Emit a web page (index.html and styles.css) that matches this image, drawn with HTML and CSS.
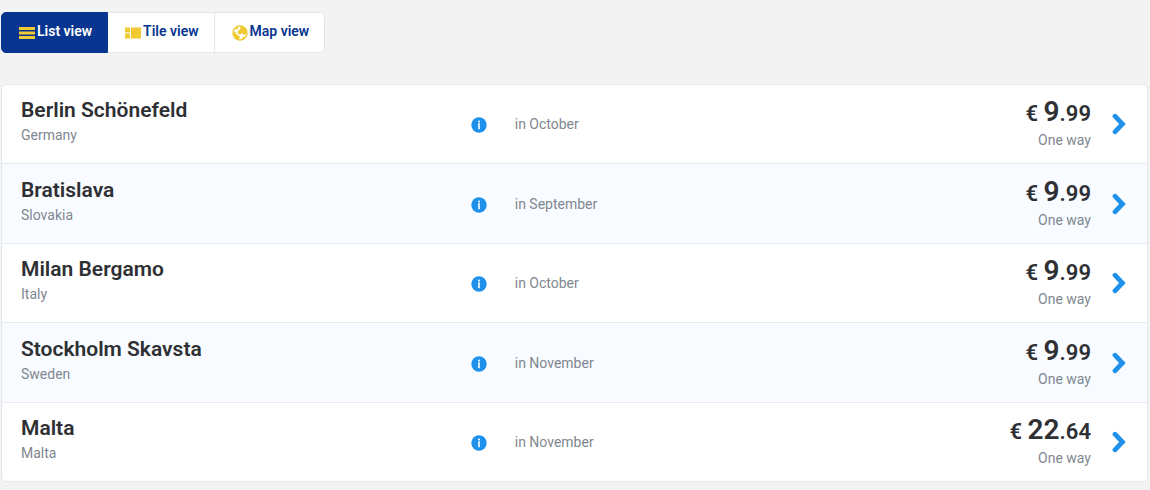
FILE: index.html
```
<!DOCTYPE html>
<html lang="en">
<head>
    <meta charset="UTF-8">
    <meta name="viewport" content="width=device-width, initial-scale=1.0">
    <title>Fare finder</title>
    <link rel="stylesheet" href="styles.css">
</head>
<body>
    <svg class="sprite" aria-hidden="true">
        <symbol id="icon-info" viewBox="0 0 16 16">
            <circle cx="8" cy="8" r="7.7" fill="#2091eb"/>
            <circle cx="8" cy="4.4" r="1" fill="#fff"/>
            <rect x="7.2" y="6.2" width="1.6" height="6" fill="#fff"/>
        </symbol>
        <symbol id="icon-arrow" viewBox="0 0 14 22">
            <path d="M3 3.2 L10.4 11 L3 18.8" fill="none" stroke="#2091eb" stroke-width="4.8" stroke-linecap="round"/>
        </symbol>
    </svg>

    <div class="view-switch">
        <button type="button" class="view-button active">
            <svg class="view-icon" viewBox="0 0 16 16">
                <path d="M0 3.5h16M0 8h16M0 12.5h16" stroke="#f1c933" stroke-width="3"/>
            </svg>
            List view
        </button>
        <button type="button" class="view-button">
            <svg class="view-icon" viewBox="0 0 16 16">
                <path d="M0 2.5h5v5H0zM0 8.5h5v5H0zM6 2.5h10.5v11H6z" fill="#f1c933"/>
            </svg>
            Tile view
        </button>
        <button type="button" class="view-button">
            <svg class="view-icon" viewBox="0 0 16 16">
                <circle cx="8" cy="8" r="7" fill="#fff" stroke="#f1c933" stroke-width="1.4"/>
                <path d="M7 5.2 8.6 3.4 8 1.4l3.4.4 2.8 2.6.8 3-1.6 2.2-1.8.2-1.2-1.6-2.2 1.4-2.2-.8-.6-1.8zM1.6 6.4l1.8.8 1.4 2.6 2.6 1.2.4 1.8-1.4 2.2L3 13.4 1.4 10zM10.4 12.2l2.6-.6-1.4 2.2-1.8.6z" fill="#f1c933"/>
                <path d="M3.4 4.2l1.2-1.4 1.6-.4.2 1-1.4 1.4z" fill="#f1c933"/>
            </svg>
            Map view
        </button>
    </div>

    <ul class="fares">
        <li class="fare">
            <div class="place">
                <h2 class="city">Berlin Schönefeld</h2>
                <span class="country">Germany</span>
            </div>
            <div class="date">
                <svg class="info-icon"><use href="#icon-info"/></svg>
                <span>in October</span>
            </div>
            <div class="price">
                <div class="amount">€ <span class="units">9</span>.99</div>
                <span class="trip">One way</span>
            </div>
            <svg class="arrow-icon"><use href="#icon-arrow"/></svg>
        </li>
        <li class="fare">
            <div class="place">
                <h2 class="city">Bratislava</h2>
                <span class="country">Slovakia</span>
            </div>
            <div class="date">
                <svg class="info-icon"><use href="#icon-info"/></svg>
                <span>in September</span>
            </div>
            <div class="price">
                <div class="amount">€ <span class="units">9</span>.99</div>
                <span class="trip">One way</span>
            </div>
            <svg class="arrow-icon"><use href="#icon-arrow"/></svg>
        </li>
        <li class="fare">
            <div class="place">
                <h2 class="city">Milan Bergamo</h2>
                <span class="country">Italy</span>
            </div>
            <div class="date">
                <svg class="info-icon"><use href="#icon-info"/></svg>
                <span>in October</span>
            </div>
            <div class="price">
                <div class="amount">€ <span class="units">9</span>.99</div>
                <span class="trip">One way</span>
            </div>
            <svg class="arrow-icon"><use href="#icon-arrow"/></svg>
        </li>
        <li class="fare">
            <div class="place">
                <h2 class="city">Stockholm Skavsta</h2>
                <span class="country">Sweden</span>
            </div>
            <div class="date">
                <svg class="info-icon"><use href="#icon-info"/></svg>
                <span>in November</span>
            </div>
            <div class="price">
                <div class="amount">€ <span class="units">9</span>.99</div>
                <span class="trip">One way</span>
            </div>
            <svg class="arrow-icon"><use href="#icon-arrow"/></svg>
        </li>
        <li class="fare">
            <div class="place">
                <h2 class="city">Malta</h2>
                <span class="country">Malta</span>
            </div>
            <div class="date">
                <svg class="info-icon"><use href="#icon-info"/></svg>
                <span>in November</span>
            </div>
            <div class="price">
                <div class="amount">€ <span class="units">22</span>.64</div>
                <span class="trip">One way</span>
            </div>
            <svg class="arrow-icon"><use href="#icon-arrow"/></svg>
        </li>
    </ul>
</body>
</html>
```
FILE: styles.css
```
* {
    box-sizing: border-box;
}
body {
    font-family: Roboto, Arial, sans-serif;
    font-size: 14px;
    line-height: 20px;
    margin: 0;
    padding: 12px 2px 8px 1px;
    background: #f3f3f3;
    color: #7f8790;
}
.sprite {
    display: none;
}
.view-switch {
    display: flex;
    margin-bottom: 31px;
}
.view-button {
    display: flex;
    align-items: center;
    gap: 2px;
    height: 41px;
    padding: 0 15px 3px 17px;
    background: #fff;
    border: 1px solid #e1e6eb;
    border-left: none;
    color: #073590;
    font-family: inherit;
    font-size: 14px;
    font-weight: 600;
    cursor: pointer;
}
.view-button:first-child {
    border-left: 1px solid #e1e6eb;
    border-radius: 5px 0 0 5px;
}
.view-button:last-child {
    border-radius: 0 5px 5px 0;
}
.view-button.active {
    background: #073590;
    border-color: #073590;
    color: #fff;
}
.view-icon {
    width: 16px;
    height: 16px;
    margin-top: 3px;
}
.fares {
    list-style: none;
    margin: 0;
    padding: 0;
    background: #fff;
    border: 1px solid #e5e8eb;
    border-radius: 5px;
    overflow: hidden;
}
.fare {
    display: flex;
    align-items: center;
    padding: 13px 21px 13px 19px;
}
.fare:nth-child(even) {
    padding-top: 14px;
    background: #f8fbff;
    border-top: 1px solid #e7ebee;
    border-bottom: 1px solid #e7ebee;
}
.place {
    align-self: flex-start;
    width: 40.7%;
}
.city {
    margin: 0 0 3px;
    color: #2e3033;
    font-size: 21px;
    font-weight: 600;
    line-height: 24px;
}
.country {
    display: block;
}
.date {
    display: flex;
    flex: 1;
    align-items: center;
    gap: 28px;
}
.info-icon {
    width: 16px;
    height: 16px;
    margin-top: 2px;
}
.price {
    text-align: right;
}
.amount {
    color: #2e3033;
    font-size: 22px;
    font-weight: 600;
    line-height: 32px;
}
.units {
    font-size: 28px;
    line-height: 20px;
}
.trip {
    display: block;
}
.arrow-icon {
    width: 14px;
    height: 22px;
    margin-left: 21px;
}
```
